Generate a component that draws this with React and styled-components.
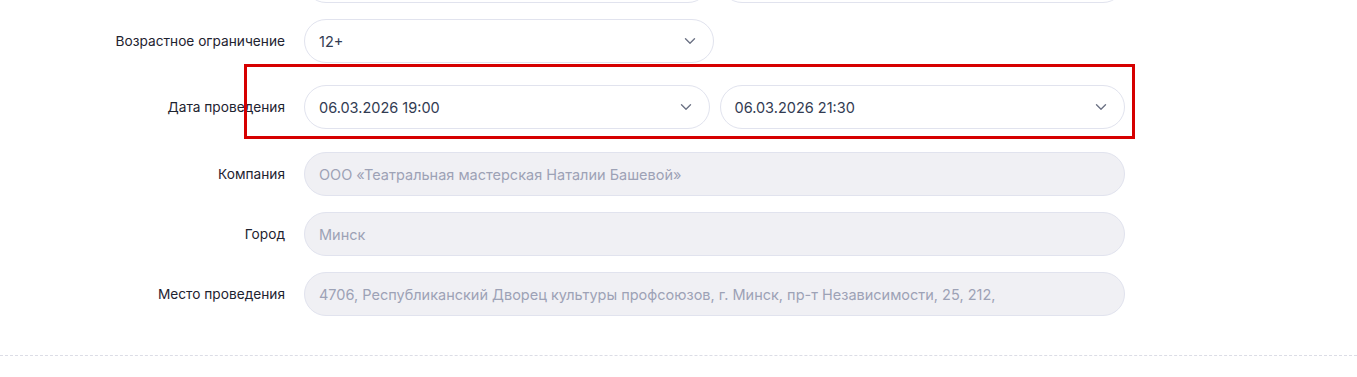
import React from 'react'
import styled, {createGlobalStyle} from 'styled-components'

const GlobalStyle = createGlobalStyle`
  html, body {
    margin: 0;
    padding: 0;
    background: #ffffff;
    font-family: Inter, "Noto Sans", sans-serif;
  }
`

const Page = styled.div`
  position: relative;
  width: 1357px;
  height: 377px;
  overflow: hidden;
  background: #fff;
`

const Form = styled.div`
  display: grid;
  grid-template-columns: 200px 821px;
  column-gap: 19px;
  row-gap: 16px;
  align-items: center;
  padding-left: 85px;
  margin-top: -41px;
`

const Label = styled.div`
  text-align: right;
  font-size: 13.7px;
  color: #1e2330;
  margin: ${p => p.$spaced ? '6px 0 7px' : '0'};
`

const Fields = styled.div`
  display: flex;
  gap: 10px;
  margin: ${p => p.$spaced ? '6px 0 7px' : '0'};
`

const Field = styled.div`
  box-sizing: border-box;
  height: 44px;
  width: ${p => p.$width || '100%'};
  flex: ${p => p.$grow ? '1 1 0' : '0 0 auto'};
  display: flex;
  align-items: center;
  justify-content: space-between;
  padding: 0 17px 0 14px;
  border: 1px solid #e1e3ee;
  border-radius: 22px;
  background: ${p => p.$disabled ? '#f0f0f4' : '#fff'};
  color: ${p => p.$disabled ? '#9da2b6' : '#323b52'};
  font-size: 14.5px;
  white-space: nowrap;
  overflow: hidden;
`

const Divider = styled.div`
  margin-top: 39px;
  border-top: 1px dashed #dcdde6;
`

const Highlight = styled.div`
  position: absolute;
  left: 244px;
  top: 64px;
  width: 891px;
  height: 75px;
  box-sizing: border-box;
  border: 3px solid #d60000;
  pointer-events: none;
`

function Chevron() {
  return (
    <svg width="12" height="8" viewBox="0 0 12 8" fill="none">
      <path d="M1.5 1.8L6 6.2L10.5 1.8" stroke="#6e7486" strokeWidth="1.4" strokeLinecap="round" strokeLinejoin="round"/>
    </svg>
  )
}

export default function App() {
  return (
    <Page>
      <GlobalStyle/>
      <Form>
        <Label></Label>
        <Fields>
          <Field $grow><span></span><Chevron/></Field>
          <Field $grow><span></span><Chevron/></Field>
        </Fields>

        <Label>Возрастное ограничение</Label>
        <Fields>
          <Field $width="410px"><span>12+</span><Chevron/></Field>
        </Fields>

        <Label $spaced>Дата проведения</Label>
        <Fields $spaced>
          <Field $grow><span>06.03.2026 19:00</span><Chevron/></Field>
          <Field $grow><span>06.03.2026 21:30</span><Chevron/></Field>
        </Fields>

        <Label>Компания</Label>
        <Field $disabled>ООО «Театральная мастерская Наталии Башевой»</Field>

        <Label>Город</Label>
        <Field $disabled>Минск</Field>

        <Label>Место проведения</Label>
        <Field $disabled>4706, Республиканский Дворец культуры профсоюзов, г. Минск, пр-т Независимости, 25, 212,</Field>
      </Form>
      <Divider/>
      <Highlight/>
    </Page>
  )
}
